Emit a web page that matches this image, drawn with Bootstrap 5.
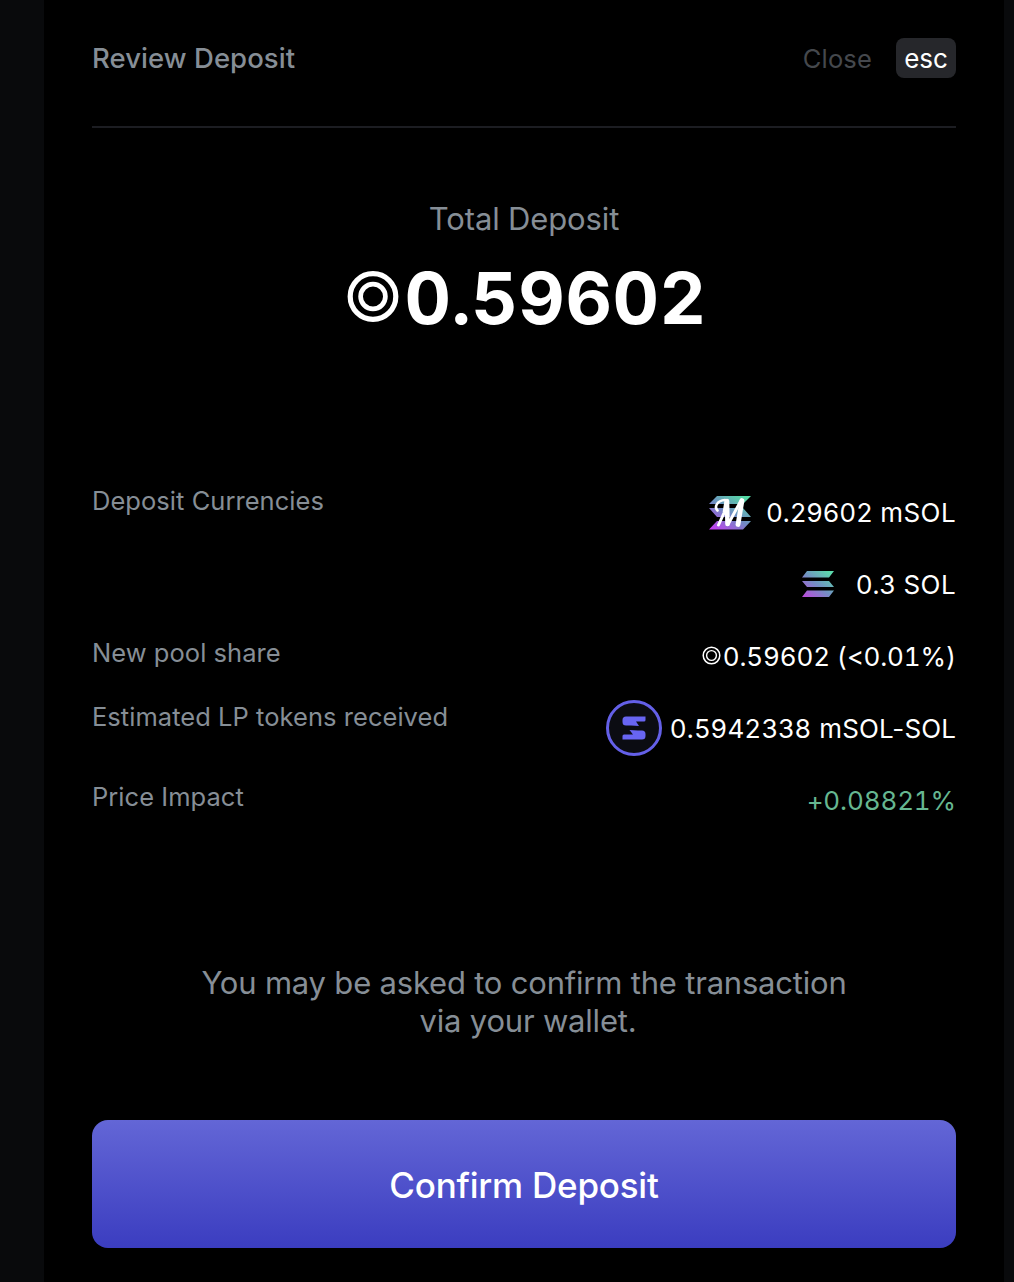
<!DOCTYPE html>
<html lang="en" data-bs-theme="dark">
<head>
<meta charset="utf-8">
<meta name="viewport" content="width=device-width, initial-scale=1">
<title>Review Deposit</title>
<link href="https://cdn.jsdelivr.net/npm/bootstrap@5.3.0/dist/css/bootstrap.min.css" rel="stylesheet">
<style>
body{background:#090a0c;font-family:Inter,"Liberation Sans",sans-serif;color:#fff;height:1282px;overflow:hidden}
.review-panel{background:#000;margin-left:44px;width:960px;height:1282px;padding:0 48px}
.panel-head{height:128px;border-bottom:2px solid #1c1d22;padding-top:38px}
.muted-ink{color:#868e96}
.panel-title{font-size:27.5px;font-weight:500;line-height:41px;letter-spacing:.05px}
.close-label{font-size:25.5px;line-height:42px;color:#45484d;letter-spacing:.15px;margin-right:24px}
.key-cap{width:60px;height:40px;border-radius:8px;background:#26272b;font-size:26px;line-height:42px}
.total-block{height:349px;padding-top:70px}
.total-label{font-size:31px;line-height:41px;letter-spacing:-.14px}
.total-value{font-size:72px;font-weight:700;line-height:80px;margin-top:19px;letter-spacing:.5px;font-feature-settings:"tnum"}
.ring-big{width:52px;height:52px;margin:0 5px 3px 6px}
.ring-small{width:19px;height:19px;margin:0 2px 3px 0}
.detail-row{min-height:72px;font-size:26px;line-height:40px}
.detail-label{font-size:25.5px;letter-spacing:.04px;padding-top:4px}
.detail-label.low{padding-top:12px}
.detail-value{height:72px;letter-spacing:.4px}
.even-digits{font-feature-settings:"tnum";letter-spacing:-.13px}
.lp-digits{letter-spacing:.65px}
.lp-pair{letter-spacing:.1px}
.msol-icon{margin:0 14px 1px 0}
.sol-icon{margin:0 22px 2px 0}
.lp-icon{margin:0 8px 2px 0}
.gain{color:#66b791}
.note{font-size:31px;line-height:38px;margin-top:127px;letter-spacing:-.2px}
.btn.confirm-btn{height:128px;margin-top:80px;border:0;border-radius:16px;background:linear-gradient(#6366d6,#3b3dc0);color:#fff;font-size:35px;font-weight:500;padding:2px 0 0;letter-spacing:-.22px}
</style>
<script src="https://cdn.jsdelivr.net/npm/bootstrap@5.3.0/dist/js/bootstrap.bundle.min.js"></script>
</head>
<body>
<main class="review-panel">
  <header class="panel-head d-flex justify-content-between align-items-start">
    <h1 class="panel-title muted-ink m-0">Review Deposit</h1>
    <div class="d-flex"><span class="close-label">Close</span><span class="key-cap text-center">esc</span></div>
  </header>
  <section class="total-block text-center">
    <div class="total-label muted-ink">Total Deposit</div>
    <div class="total-value d-flex justify-content-center align-items-center"><svg class="ring-big" viewBox="0 0 52 52" fill="none" stroke="#fff"><circle cx="26" cy="25.500" r="22.800" stroke-width="5.200"/><circle cx="26" cy="25.500" r="12.400" stroke-width="4.700"/></svg><span>0.59602</span></div>
  </section>
  <section>
    <div class="detail-row d-flex justify-content-between">
      <div class="detail-label muted-ink">Deposit Currencies</div>
      <div>
        <div class="detail-value d-flex align-items-center justify-content-end">
          <svg class="msol-icon" width="44" height="34" viewBox="0 0 44 34">
            <defs><linearGradient id="msol" gradientUnits="userSpaceOnUse" x1="8" y1="36" x2="32" y2="-2"><stop offset="0" stop-color="#c43df0"/><stop offset=".5" stop-color="#7189c4"/><stop offset="1" stop-color="#55dba5"/></linearGradient></defs>
            <path fill="url(#msol)" d="M9 0h34l-8 8H1zM1 12h34l8 9H9zM9 25h34l-8 8.500H1z"/>
            <g fill="none" stroke="#fff" stroke-linecap="round" stroke-linejoin="round">
              <path stroke-width="2.600" d="M9.500 14.500C6 11 9 4.500 17 4"/>
              <path stroke-width="3" d="M18 4.500L16 17 10.500 29"/>
              <path stroke-width="4.600" d="M19 5L19.500 28"/>
              <path stroke-width="3" d="M20 28.500L33 4.500"/>
              <path stroke-width="4.800" d="M34 4.500L30 28.500"/>
            </g>
          </svg>
          <span>0.29602 mSOL</span>
        </div>
        <div class="detail-value d-flex align-items-center justify-content-end">
          <svg class="sol-icon" width="32" height="26" viewBox="0 0 32 26">
            <defs><linearGradient id="sol" gradientUnits="userSpaceOnUse" x1="4" y1="27" x2="26" y2="0"><stop offset="0" stop-color="#b94ddb"/><stop offset=".5" stop-color="#738fc3"/><stop offset="1" stop-color="#5cd9ac"/></linearGradient></defs>
            <path fill="url(#sol)" d="M5 0h27l-5 6.500H0zM0 10h27l5 6H5zM5 19.500h27l-5 6.500H0z"/>
          </svg>
          <span>0.3 SOL</span>
        </div>
      </div>
    </div>
    <div class="detail-row d-flex justify-content-between">
      <div class="detail-label low muted-ink">New pool share</div>
      <div class="detail-value even-digits d-flex align-items-center"><svg class="ring-small" viewBox="0 0 19 19" fill="none" stroke="#fff"><circle cx="9.500" cy="9.500" r="8.300" stroke-width="1.500"/><circle cx="9.500" cy="9.500" r="4.900" stroke-width="1.400"/></svg><span>0.59602 (&lt;0.01%)</span></div>
    </div>
    <div class="detail-row d-flex justify-content-between">
      <div class="detail-label muted-ink">Estimated LP tokens received</div>
      <div class="detail-value d-flex align-items-center">
        <svg class="lp-icon" width="56" height="56" viewBox="0 0 56 56">
          <circle cx="28" cy="28" r="26.500" fill="#0b0c12" stroke="#6460e8" stroke-width="3"/>
          <path fill="#6865f2" d="M20 16.500h19.500v3.500q0 1.500-1.500 1.500H30l3 4.500-8-.5h-5q-3.500 0-3.500-3.500v-2q0-3.500 3.500-3.500zM36 39.500H16.500V36q0-1.500 1.500-1.500h9L23.500 30l8.500.5h4q3.500 0 3.500 3.500v2q0 3.500-3.500 3.500z"/>
        </svg>
        <span><span class="lp-digits">0.5942338</span> <span class="lp-pair">mSOL-SOL</span></span>
      </div>
    </div>
    <div class="detail-row d-flex justify-content-between">
      <div class="detail-label low muted-ink">Price Impact</div>
      <div class="detail-value even-digits d-flex align-items-center gain">+0.08821%</div>
    </div>
  </section>
  <p class="note muted-ink text-center mb-0">You may be asked to confirm the transaction<br><span class="ps-2">via your wallet.</span></p>
  <button type="button" class="btn confirm-btn w-100">Confirm Deposit</button>
</main>
</body>
</html>
